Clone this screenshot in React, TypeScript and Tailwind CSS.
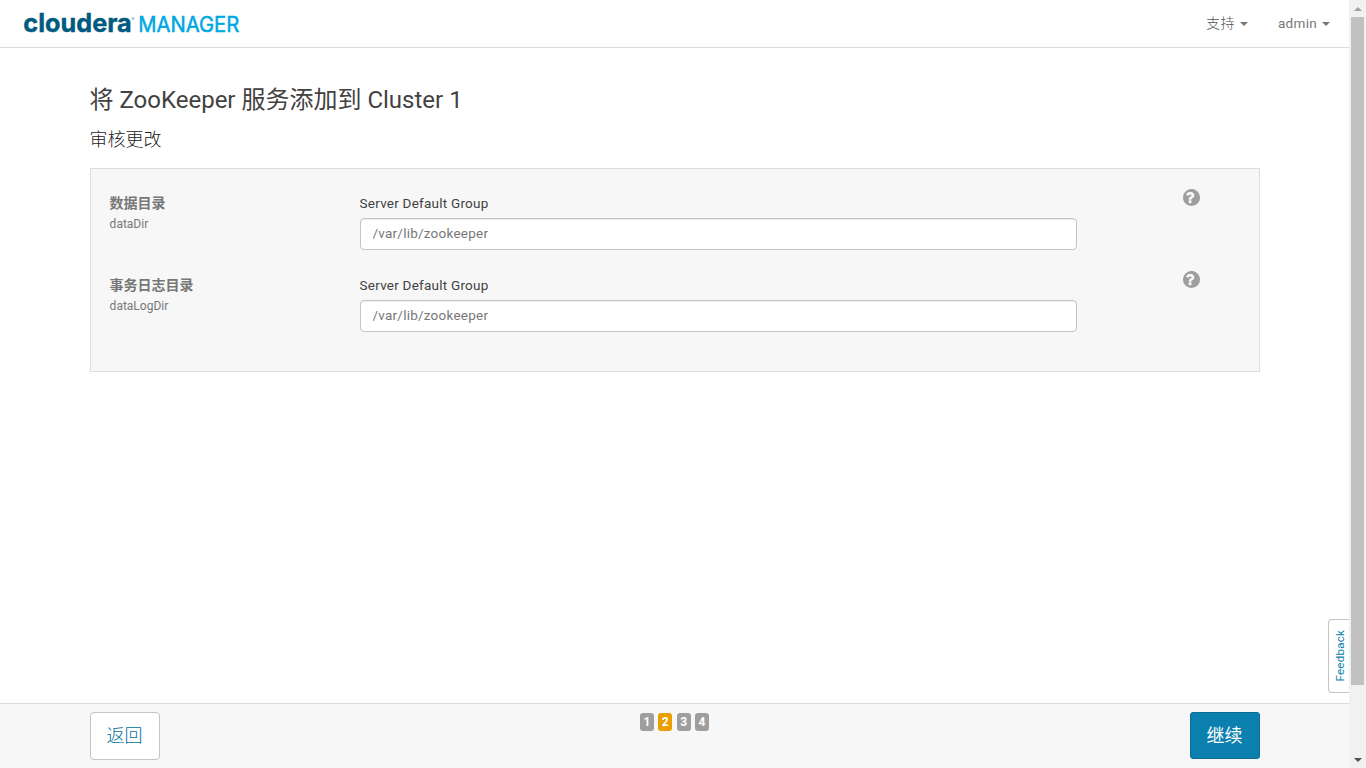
const HELP_PATH =
  'M896 1376v-192q0-14-9-23t-23-9h-192q-14 0-23 9t-9 23v192q0 14 9 23t23 9h192q14 0 23-9t9-23zM1152 704q0-88-55.5-163t-138.5-116-170-41q-243 0-371 213-15 24 8 42l132 100q7 6 19 6 16 0 25-12 53-68 86-92 34-24 86-24 48 0 85.5 26t37.5 59q0 38-20 61t-68 45q-63 28-115.5 86.5t-52.5 125.5v36q0 14 9 23t23 9h192q14 0 23-9t9-23q0-19 21.5-49.5t54.5-49.5q32-18 49-28.5t46-35 44.5-48 28-60.5 12.5-81zM1664 896q0 209-103 385.5t-279.5 279.5-385.5 103-385.5-103-279.5-279.5-103-385.5 103-385.5 279.5-279.5 385.5-103 385.5 103 279.5 279.5 103 385.5z';

const settings = [
  { label: '数据目录', name: 'dataDir' },
  { label: '事务日志目录', name: 'dataLogDir' },
];

function Logo() {
  return (
    <svg width="240" height="46" viewBox="0 0 240 46" className="ml-[20px] overflow-visible" aria-label="cloudera MANAGER">
      <text x="3.3" y="32" fill="#005a80" stroke="#005a80" strokeWidth="0.4" fontFamily="Inter" fontWeight="700" fontSize="25.5" textLength="108.5" lengthAdjust="spacingAndGlyphs">
        cloudera
      </text>
      <circle cx="113" cy="18.5" r="1" fill="none" stroke="#5b93ac" strokeWidth="0.6" />
      <text x="118.3" y="32.3" fill="#00a7e1" stroke="#00a7e1" strokeWidth="0.5" fontFamily="Inter" fontWeight="400" fontSize="21" textLength="101" lengthAdjust="spacingAndGlyphs">
        MANAGER
      </text>
    </svg>
  );
}

function Menu({ text, className }: { text: string; className: string }) {
  return (
    <button className="flex h-[46px] items-center leading-[18px] text-[#777]">
      <span className={className}>{text}</span>
      <span className="ml-[5px] mt-[2px] border-x-4 border-t-4 border-x-transparent border-t-[#777]" />
    </button>
  );
}

function Setting({ label, name }: { label: string; name: string }) {
  return (
    <div className="flex h-[82px]">
      <div className="-ml-[0.4px] w-[250.4px] pt-[4px] text-[#777]">
        <div className="text-[14px] font-bold leading-[20px]">{label}</div>
        <div className="mt-[3px] text-[12px] leading-[16px]">{name}</div>
      </div>
      <div className="w-[717px]">
        <div className="-ml-[0.4px] pt-[5px] text-[13.5px] leading-[18px] tracking-[0.23px] text-[#424242]">Server Default Group</div>
        <input
          defaultValue="/var/lib/zookeeper"
          className="mt-[6px] block h-8 w-full rounded-[4px] border border-[#c4c4c4] bg-white px-[11.5px] pb-[2px] text-[13.5px] tracking-[0.23px] text-[#777] shadow-[inset_0_1px_1px_rgba(0,0,0,0.075)] outline-none"
        />
      </div>
      <svg width="17" height="17" viewBox="128 128 1536 1536" className="ml-[106px]" fill="#9e9e9e">
        <path d={HELP_PATH} />
      </svg>
    </div>
  );
}

function Scrollbar() {
  return (
    <div className="flex w-[17px] shrink-0 flex-col items-center bg-[#f1f1f1]">
      <div className="flex h-[17px] items-center">
        <span className="border-x-4 border-b-4 border-x-transparent border-b-[#a0a0a0]" />
      </div>
      <div className="h-[668px] w-[13px] bg-[#c1c1c1]" />
      <div className="mt-auto flex h-[17px] items-center">
        <span className="border-x-4 border-t-4 border-x-transparent border-t-[#505050]" />
      </div>
    </div>
  );
}

export default function App() {
  return (
    <div className="flex h-screen w-full overflow-hidden bg-white font-['Roboto','Noto_Sans_CJK_SC',sans-serif]">
      <div className="relative flex min-w-0 flex-1 flex-col">
        <header className="flex h-12 shrink-0 justify-between border-b border-[#dcdcdc]">
          <Logo />
          <nav className="flex gap-[30px] pr-[19px]">
            <Menu text="支持" className="text-[14px] font-light tracking-[0.5px] text-[#555]" />
            <Menu text="admin" className="text-[13.5px] tracking-[0.3px]" />
          </nav>
        </header>
        <main className="flex-1 pl-[90px] pr-[89px] text-[#424242]">
          <h1 className="-ml-[0.5px] mt-[36px] text-[24px] leading-[32px]">将 ZooKeeper 服务添加到 Cluster 1</h1>
          <h2 className="-ml-[0.5px] mt-[12px] text-[18px] font-light leading-[24px] text-[#222]">审核更改</h2>
          <section className="mt-[16px] h-[204px] border border-[#dcdcdc] bg-[#f7f7f7] pl-[19px] pt-[20px]">
            {settings.map((s) => (
              <Setting key={s.name} label={s.label} name={s.name} />
            ))}
          </section>
        </main>
        <button className="absolute right-0 top-[619px] flex h-[74px] w-[21px] items-center justify-center rounded-l-[4px] border border-r-0 border-[#c4c4c4] bg-white pl-[2px] text-[#0b7fad]">
          <span className="rotate-180 text-[11.5px] leading-[14px] tracking-[0.25px] [writing-mode:vertical-rl]">Feedback</span>
        </button>
        <footer className="flex h-[65px] shrink-0 items-start justify-between border-t border-[#dcdcdc] bg-[#f7f7f7] pl-[90px] pr-[89px] pt-2">
          <button className="h-12 w-[70px] rounded-[4px] border border-[#c4c4c4] bg-white pb-[2px] pr-px text-[18px] font-light text-[#006f9c]">返回</button>
          <div className="-ml-px mt-px flex gap-[4.2px] text-[12px] font-bold leading-[18px] text-white">
            {[1, 2, 3, 4].map((n) => (
              <span key={n} className={`w-[14.2px] rounded-[3px] text-center ${n === 2 ? 'bg-[#e99f00]' : 'bg-[#9e9e9e]'}`}>
                {n}
              </span>
            ))}
          </div>
          <button className="h-[47px] w-[70px] rounded-[3px] border border-[#096e96] bg-[#0b7fad] pr-px text-[18px] text-white">继续</button>
        </footer>
      </div>
      <Scrollbar />
    </div>
  );
}
